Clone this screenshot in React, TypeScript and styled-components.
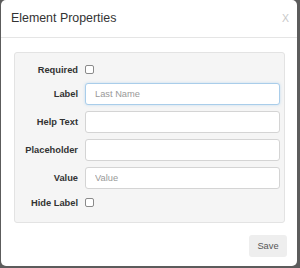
import React, { FC } from 'react'
import styled, { createGlobalStyle } from 'styled-components'

const GlobalStyle = createGlobalStyle`
    html, body {
        margin: 0;
        padding: 0;
        background: #5c5c5c;
        font-family: "Liberation Sans", Arial, sans-serif;
    }
`;

type FieldProps = {
    label: string;
    kind: 'text' | 'check';
    placeholder?: string;
    focused?: boolean;
}

const fields: FieldProps[] = [
    { label: 'Required', kind: 'check' },
    { label: 'Label', kind: 'text', placeholder: 'Last Name', focused: true },
    { label: 'Help Text', kind: 'text' },
    { label: 'Placeholder', kind: 'text' },
    { label: 'Value', kind: 'text', placeholder: 'Value' },
    { label: 'Hide Label', kind: 'check' },
];

const Field: FC<FieldProps> = ({ label, kind, placeholder, focused }) => {
    return (
        <RowStyled $kind={kind}>
            <LabelStyled>{label}</LabelStyled>
            {kind === 'check'
                ? <CheckStyled type="checkbox" />
                : <InputStyled type="text" placeholder={placeholder} $focused={!!focused} />}
        </RowStyled>
    )
}

const App: FC = () => {
    return (
        <>
            <GlobalStyle />
            <ModalStyled>
                <HeaderStyled>
                    <TitleStyled>Element Properties</TitleStyled>
                    <CloseStyled>X</CloseStyled>
                </HeaderStyled>

                <BodyStyled>
                    <WellStyled>
                        {fields.map((f) => <Field key={f.label} {...f} />)}
                    </WellStyled>
                </BodyStyled>

                <FooterStyled>
                    <ButtonStyled>Save</ButtonStyled>
                </FooterStyled>
            </ModalStyled>
        </>
    )
}

export default App;

const ModalStyled = styled.div`
    margin-left: 1px;
    width: 296px;
    height: 266px;
    background: #fff;
    border-radius: 5px;
    box-sizing: border-box;
    display: flex;
    flex-direction: column;
`;

const HeaderStyled = styled.div`
    height: 38px;
    box-sizing: border-box;
    border-bottom: 1px solid #e5e5e5;
    display: flex;
    align-items: center;
    justify-content: space-between;
    padding: 0 8px 1px 10px;
`;

const TitleStyled = styled.div`
    font-size: 12.4px;
    color: #333;
`;

const CloseStyled = styled.div`
    font-size: 10.5px;
    color: #c8c8c8;
`;

const BodyStyled = styled.div`
    padding: 14px 12px 0 13px;
`;

const WellStyled = styled.div`
    height: 171px;
    box-sizing: border-box;
    background: #f5f5f5;
    border: 1px solid #e3e3e3;
    border-radius: 3px;
    padding: 9px 4px 0 0;
    display: flex;
    flex-direction: column;
    gap: 6px;
`;

const RowStyled = styled.div<{ $kind: 'text' | 'check' }>`
    display: grid;
    grid-template-columns: 63px 1fr;
    column-gap: 7px;
    align-items: center;
    height: ${(p) => (p.$kind === 'check' ? '15px' : '22px')};
`;

const LabelStyled = styled.label`
    text-align: right;
    font-size: 9.3px;
    font-weight: bold;
    color: #333;
`;

const CheckStyled = styled.input`
    appearance: none;
    margin: 0;
    width: 9px;
    height: 9px;
    border: 1px solid #8a8a8a;
    border-radius: 2px;
    background: #fff;
`;

const InputStyled = styled.input<{ $focused: boolean }>`
    height: 22px;
    box-sizing: border-box;
    width: 100%;
    margin: 0;
    padding: 0 9px;
    font-family: "Liberation Sans", Arial, sans-serif;
    font-size: 9.3px;
    color: #555;
    background: #fff;
    border-radius: 3px;
    outline: none;
    border: 1px solid ${(p) => (p.$focused ? '#a9cdea' : '#d4d4d4')};
    box-shadow: ${(p) => (p.$focused ? '0 0 3px rgba(102, 175, 233, 0.35)' : 'none')};

    &::placeholder {
        color: #999;
    }
`;

const FooterStyled = styled.div`
    display: flex;
    justify-content: flex-end;
    padding: 12px 10px 0 0;
`;

const ButtonStyled = styled.button`
    width: 38px;
    height: 22px;
    border: none;
    border-radius: 3px;
    background: #eeeeee;
    color: #555;
    font-family: "Liberation Sans", Arial, sans-serif;
    font-size: 9.3px;
    padding: 0;
`;
